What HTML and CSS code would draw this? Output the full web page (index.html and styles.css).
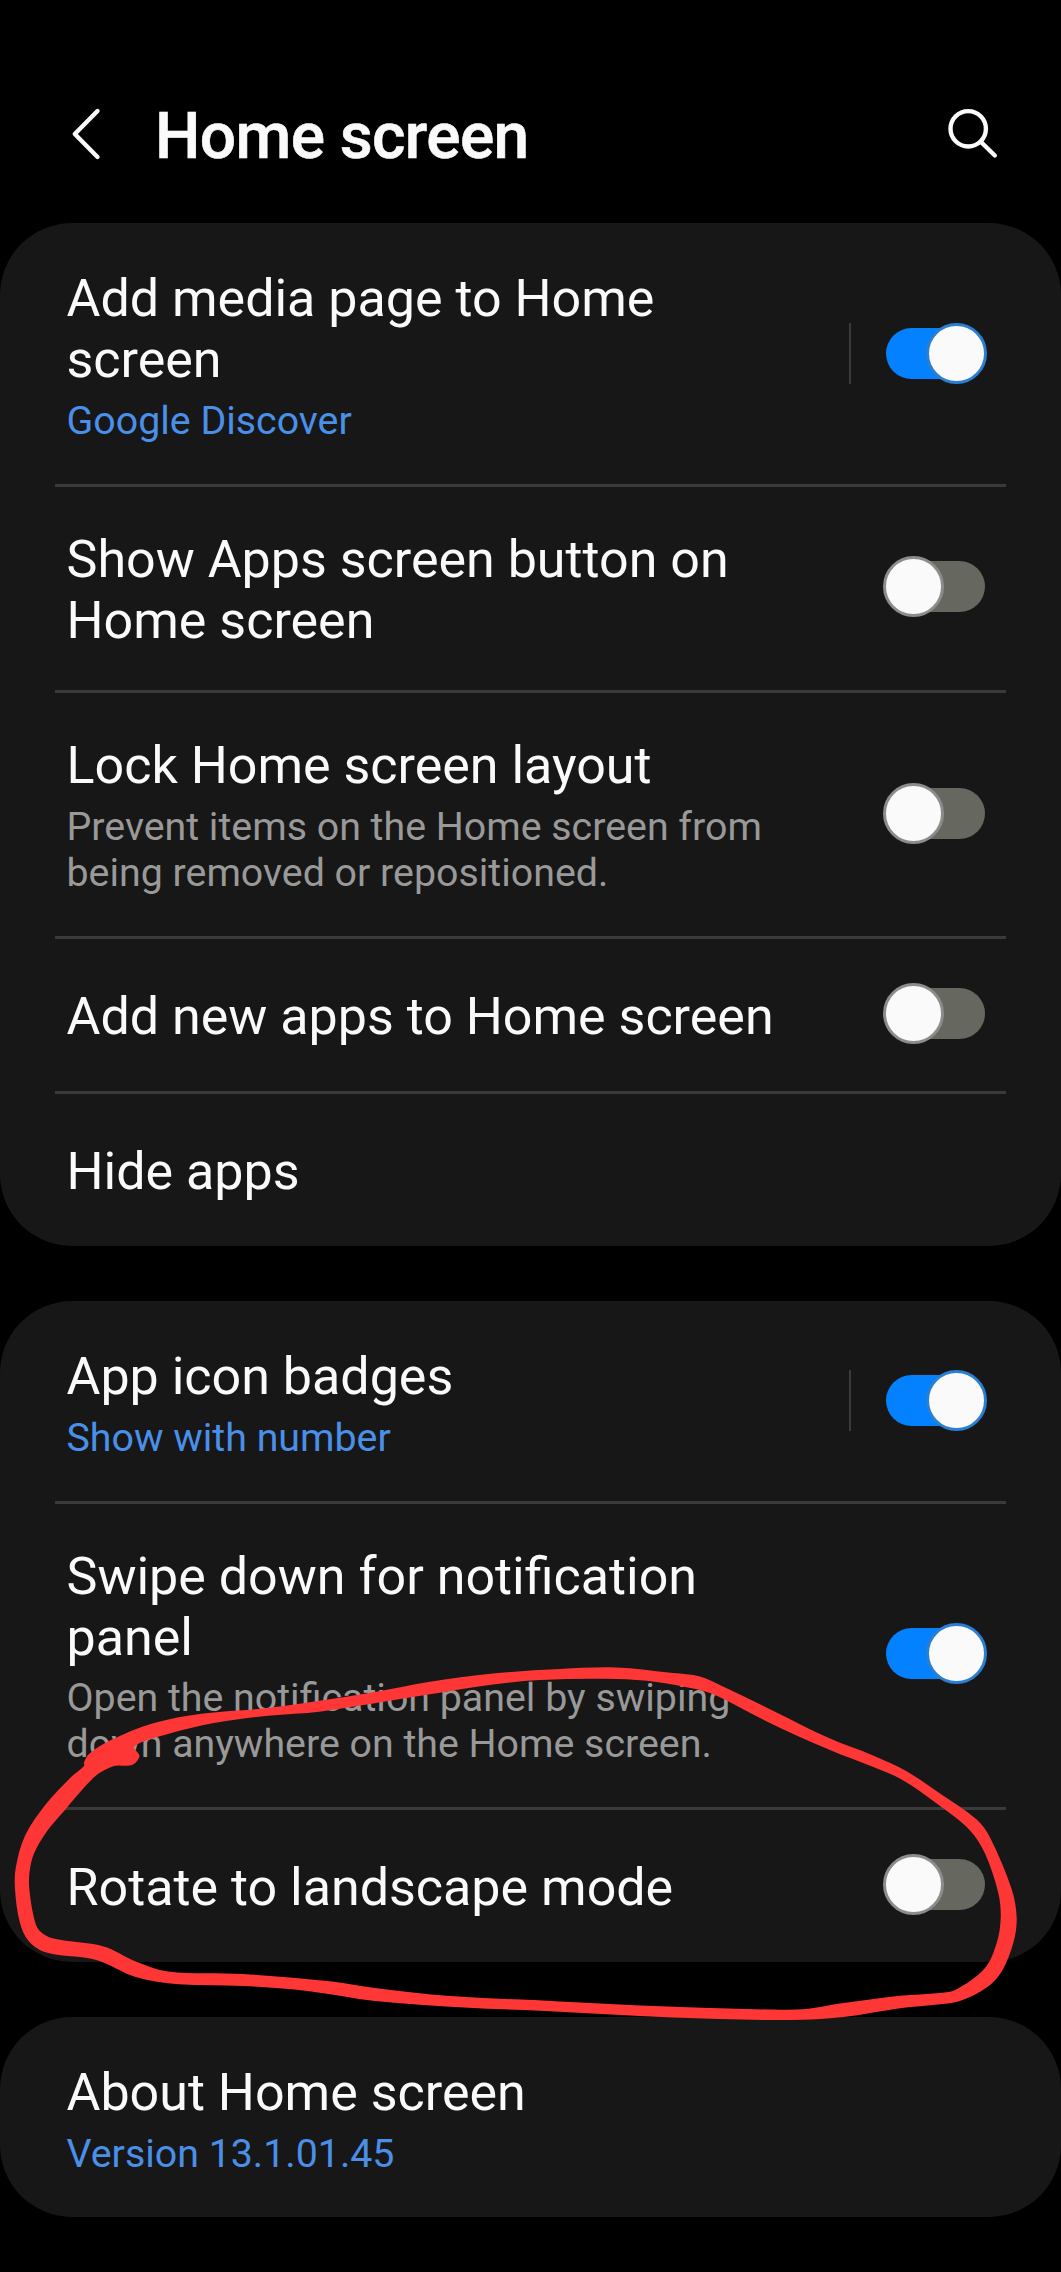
FILE: index.html
```html
<!DOCTYPE html>
<html lang="en">
  <head>
    <meta charset="UTF-8" />
    <meta name="viewport" content="width=device-width, initial-scale=1.0" />
    <title>Home screen</title>
    <link rel="stylesheet" href="styles.css">
  </head>
  <body>
    <div class="header">
      <svg class="back" viewBox="0 0 32 56" fill="none" stroke="#fafafa" stroke-width="4.4" stroke-linecap="round" stroke-linejoin="round">
        <path d="M27.5 5 L4.8 28 L27.5 51" />
      </svg>
      <h1>Home screen</h1>
      <svg class="search" viewBox="0 0 54 54" fill="none" stroke="#fafafa" stroke-width="4.4" stroke-linecap="round">
        <circle cx="23.2" cy="21.8" r="17.7" />
        <path d="M36 35 L49.8 48.5" />
      </svg>
    </div>

    <div class="card">
      <div class="item">
        <div class="text">
          <div class="title">Add media page to Home screen</div>
          <div class="sub blue">Google Discover</div>
        </div>
        <div class="separator"></div>
        <div class="switch on"><span class="knob"></span></div>
      </div>
      <div class="divider"></div>
      <div class="item">
        <div class="text">
          <div class="title">Show Apps screen button on Home screen</div>
        </div>
        <div class="switch"><span class="knob"></span></div>
      </div>
      <div class="divider"></div>
      <div class="item">
        <div class="text">
          <div class="title">Lock Home screen layout</div>
          <div class="sub">Prevent items on the Home screen from being removed or repositioned.</div>
        </div>
        <div class="switch"><span class="knob"></span></div>
      </div>
      <div class="divider"></div>
      <div class="item">
        <div class="text">
          <div class="title">Add new apps to Home screen</div>
        </div>
        <div class="switch"><span class="knob"></span></div>
      </div>
      <div class="divider"></div>
      <div class="item">
        <div class="text">
          <div class="title">Hide apps</div>
        </div>
      </div>
    </div>

    <div class="card">
      <div class="item">
        <div class="text">
          <div class="title">App icon badges</div>
          <div class="sub blue">Show with number</div>
        </div>
        <div class="separator"></div>
        <div class="switch on"><span class="knob"></span></div>
      </div>
      <div class="divider"></div>
      <div class="item">
        <div class="text">
          <div class="title">Swipe down for notification panel</div>
          <div class="sub">Open the notification panel by swiping down anywhere on the Home screen.</div>
        </div>
        <div class="switch on"><span class="knob"></span></div>
      </div>
      <div class="divider"></div>
      <div class="item">
        <div class="text">
          <div class="title">Rotate to landscape mode</div>
        </div>
        <div class="switch"><span class="knob"></span></div>
      </div>
    </div>

    <div class="card">
      <div class="item">
        <div class="text">
          <div class="title">About Home screen</div>
          <div class="sub blue">Version 13.1.01.45</div>
        </div>
      </div>
    </div>

    <!-- Hand drawn circle around the rotate setting -->
    <svg class="marker" viewBox="0 0 1061 2272">
      <path id="marker-path" fill="#ff3636" fill-rule="evenodd" />
    </svg>

    <script src="marker.js"></script>
  </body>
</html>
```

FILE: styles.css
```css
* {
  box-sizing: border-box;
}
body {
  margin: 0;
  background: #000;
  color: #fafafa;
  font-family: Roboto, "Liberation Sans", sans-serif;
  position: relative;
  height: 2272px;
  overflow: hidden;
}
.header {
  display: flex;
  align-items: center;
  height: 223px;
  padding: 44px 62px 0 70px;
}
.header h1 {
  flex: 1;
  margin: 5px 0 0 53px;
  font-size: 64px;
  line-height: 75px;
  font-weight: 500;
  letter-spacing: -0.6px;
  -webkit-text-stroke: 0.6px #fafafa;
}
.back {
  width: 32px;
  height: 56px;
}
.search {
  width: 54px;
  height: 54px;
}
.card {
  background: #171717;
  border-radius: 72px;
  margin-bottom: 55px;
}
.item {
  display: flex;
  align-items: center;
  min-height: 155px;
  padding: 0 76px 0 66.5px;
}
.text {
  width: 742px;
  padding: 45px 0 39.7px;
}
.title {
  font-size: 52px;
  line-height: 61px;
}
.sub {
  margin-top: 7.8px;
  font-size: 39.35px;
  line-height: 46.1px;
  color: #999;
}
.blue {
  color: #4a8fe8;
}
.divider {
  height: 3px;
  margin: 0 55px -3px;
  background: #3a3a3a;
}
.separator {
  width: 2px;
  height: 61px;
  margin-left: 40.5px;
  background: #3a3a3a;
}
.switch {
  position: relative;
  width: 99px;
  height: 51px;
  margin-left: auto;
  border-radius: 26px;
  background: #66675f;
}
.knob {
  position: absolute;
  top: -5px;
  left: -3px;
  width: 61px;
  height: 61px;
  border: 3px solid #8c8c8c;
  border-radius: 50%;
  background: #fafafa;
}
.on {
  background: #0381fe;
}
.on .knob {
  left: 39.5px;
  border-color: #2a7fd2;
}
.marker {
  position: absolute;
  top: 0;
  left: 0;
  width: 1061px;
  height: 2272px;
}
```

FILE: marker.js
```js
const outer = [
  [84, 1762.5], [89, 1754], [111, 1740], [154, 1723], [203.5, 1713.5], [268, 1708], [321, 1700.5],
  [375, 1692], [428.5, 1682], [493, 1673.5], [560, 1669], [616, 1667.5], [673, 1673], [700, 1676.5],
  [723, 1686.5], [773, 1710.7], [830, 1738.6], [873, 1755.4], [907, 1771.4], [940, 1793.6],
  [976.7, 1819.6], [990, 1837.5], [1011.7, 1889.3], [1016.7, 1918], [1013.3, 1943], [1001.7, 1971.4],
  [986.7, 1987.5], [960, 2001], [940, 2004.3], [900, 2008.2], [843.3, 2017], [790, 2020],
  [673, 2017.5], [540, 2010.7], [464, 2007.5], [375, 2001], [311, 1991.4], [243, 1986],
  [178.6, 1984.3], [135.7, 1977], [96.4, 1960], [46.4, 1952.5], [28.6, 1941], [19.6, 1921.4],
  [15, 1889], [15.7, 1868], [25, 1835.7], [46.4, 1803.6], [71.4, 1776.8], [84, 1766]
];

const inner = [
  [132, 1765], [114, 1766], [94.6, 1776.8], [64.3, 1810.7], [46.4, 1832], [34, 1853.6],
  [29.6, 1871.4], [29.3, 1889], [34, 1918], [39.3, 1930.4], [53.6, 1938.6], [103.6, 1946.4],
  [135.7, 1961.4], [168, 1971.4], [243, 1974], [332, 1981.4], [375, 1988], [446.4, 1995.7],
  [560, 2001.4], [640, 2005.4], [773, 2009.6], [806.7, 2009], [840, 2003.6], [900, 1995.7],
  [940, 1993], [956.7, 1989.3], [985, 1968], [996.7, 1943], [1000.7, 1918], [998.3, 1893],
  [985, 1853.6], [970, 1830.4], [936.7, 1803.6], [903.3, 1780.4], [873.3, 1767], [830, 1750],
  [766.7, 1721.4], [716.7, 1695.7], [696.7, 1689.3], [656.7, 1682], [616.7, 1679], [540, 1680],
  [493, 1684.6], [428.5, 1694.6], [321, 1711.4], [268, 1715.7], [214, 1723], [168, 1734],
  [134, 1746.4], [139.5, 1756]
];

// smooth closed curve through all points
function smooth(p) {
  const n = p.length;
  let d = `M${p[0]}`;
  for (let i = 0; i < n; i++) {
    const a = p[(i + n - 1) % n], b = p[i], c = p[(i + 1) % n], e = p[(i + 2) % n];
    const len = Math.hypot(c[0] - b[0], c[1] - b[1]);
    const t1 = len / (len + Math.hypot(b[0] - a[0], b[1] - a[1])) / 3;
    const t2 = len / (len + Math.hypot(e[0] - c[0], e[1] - c[1])) / 3;
    d += `C${b[0] + (c[0] - a[0]) * t1},${b[1] + (c[1] - a[1]) * t1}`;
    d += ` ${c[0] - (e[0] - b[0]) * t2},${c[1] - (e[1] - b[1]) * t2} ${c}`;
  }
  return d + "Z";
}

document.getElementById("marker-path").setAttribute("d", smooth(outer) + smooth(inner));
```
